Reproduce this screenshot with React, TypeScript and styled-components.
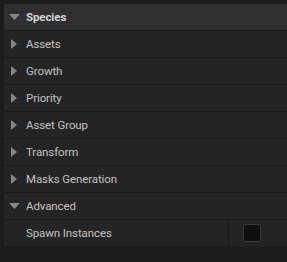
import styled, { createGlobalStyle } from "styled-components";

const GlobalStyle = createGlobalStyle`
  html, body {
    margin: 0;
    padding: 0;
    background: #1b1b1b;
  }
  body {
    font-family: Roboto, "Liberation Sans", sans-serif;
  }
`

type RowProps = {
    label: string
    open?: boolean
}

const items = ['Assets', 'Growth', 'Priority', 'Asset Group', 'Transform', 'Masks Generation']

const Arrow = ({open}: {open?: boolean}) => (
    <ArrowBox>
        {open
            ? <svg width="11" height="6" viewBox="0 0 11 6"><polygon points="0,0 11,0 5.5,6" fill="#858585"/></svg>
            : <svg width="6" height="10" viewBox="0 0 6 10"><polygon points="0,0 6,5 0,10" fill="#858585"/></svg>}
    </ArrowBox>
)

const Category = (props: RowProps) => (
    <Row>
        <Arrow open={props.open}/>
        <Label>{props.label}</Label>
    </Row>
)

export default function App() {
    return (
        <>
            <GlobalStyle/>
            <Panel>
                <Header>
                    <Arrow open/>
                    <HeaderLabel>Species</HeaderLabel>
                </Header>
                {items.map(i => <Category key={i} label={i}/>)}
                <Category label="Advanced" open/>
                <PropRow>
                    <PropName>
                        <Label>Spawn Instances</Label>
                    </PropName>
                    <PropValue>
                        <Checkbox/>
                    </PropValue>
                </PropRow>
            </Panel>
        </>
    )
}

const Panel = styled.div`
  width: 287px;
  height: 262px;
  padding-top: 4px;
  box-sizing: border-box;
  background: #1c1c1c;
  display: flex;
  flex-direction: column;
`
const Header = styled.div`
  height: 26px;
  margin-left: 4px;
  display: flex;
  align-items: center;
  background: #2f2f2f;
  border-bottom: 1px solid #1a1a1a;
`
const Row = styled.div`
  height: 26px;
  margin-left: 4px;
  display: flex;
  align-items: center;
  background: #242424;
  border-bottom: 1px solid #1a1a1a;
`
const ArrowBox = styled.div`
  width: 22px;
  display: flex;
  justify-content: center;
  align-items: center;
  padding-right: 2px;
  box-sizing: border-box;
`
const Label = styled.span`
  font-size: 11.5px;
  letter-spacing: -0.1px;
  color: #c2c2c2;
`
const HeaderLabel = styled(Label)`
  font-weight: bold;
  color: #d4d4d4;
`
const PropRow = styled.div`
  height: 26px;
  margin-left: 4px;
  display: flex;
  background: #242424;
  border-bottom: 1px solid #1c1c1c;
`
const PropName = styled.div`
  width: 225px;
  box-sizing: border-box;
  padding-left: 22px;
  display: flex;
  align-items: center;
  border-right: 1px solid #181818;
`
const PropValue = styled.div`
  flex: 1;
  display: flex;
  align-items: center;
  padding-left: 14px;
`
const Checkbox = styled.div`
  width: 16px;
  height: 16px;
  background: #0f0f0f;
  border: 1px solid #3c3c3c;
  border-radius: 3px;
`
